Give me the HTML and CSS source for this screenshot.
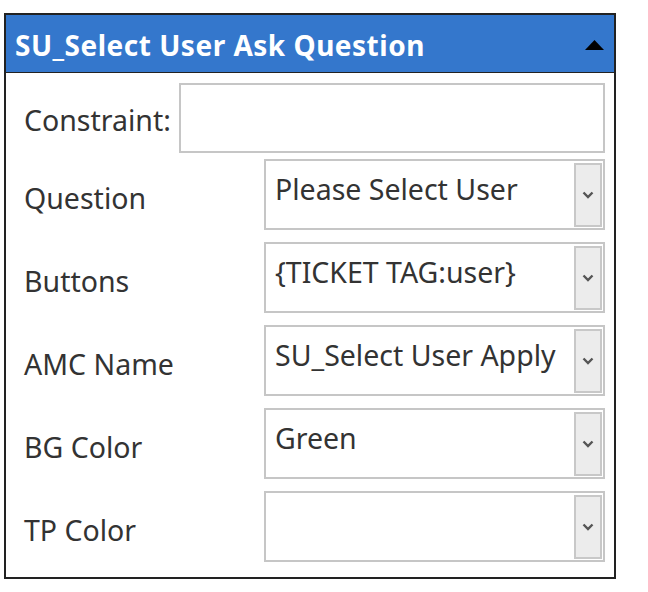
FILE: index.html
```html
<!DOCTYPE html>
<html>
<head>
<meta charset="utf-8">
<link rel="stylesheet" href="styles.css">
</head>
<body>
<div class="panel">
  <div class="header">
    <span class="title">SU_Select User Ask Question</span>
    <svg class="caret" width="19" height="10" viewBox="0 0 19 10"><polygon points="0,10 19,10 9.5,0" fill="#000"/></svg>
  </div>
  <div class="body">
    <div class="row row-constraint">
      <span class="label">Constraint:</span>
      <div class="input"></div>
    </div>
    <div class="row">
      <span class="label">Question</span>
      <div class="select"><span class="value">Please Select User</span><span class="btn"><svg width="12" height="8" viewBox="0 0 12 8"><polyline points="1.5,1.5 6,6 10.5,1.5" fill="none" stroke="#555" stroke-width="2.4"/></svg></span></div>
    </div>
    <div class="row">
      <span class="label">Buttons</span>
      <div class="select"><span class="value">{TICKET TAG:user}</span><span class="btn"><svg width="12" height="8" viewBox="0 0 12 8"><polyline points="1.5,1.5 6,6 10.5,1.5" fill="none" stroke="#555" stroke-width="2.4"/></svg></span></div>
    </div>
    <div class="row">
      <span class="label">AMC Name</span>
      <div class="select"><span class="value">SU_Select User Apply</span><span class="btn"><svg width="12" height="8" viewBox="0 0 12 8"><polyline points="1.5,1.5 6,6 10.5,1.5" fill="none" stroke="#555" stroke-width="2.4"/></svg></span></div>
    </div>
    <div class="row">
      <span class="label">BG Color</span>
      <div class="select"><span class="value">Green</span><span class="btn"><svg width="12" height="8" viewBox="0 0 12 8"><polyline points="1.5,1.5 6,6 10.5,1.5" fill="none" stroke="#555" stroke-width="2.4"/></svg></span></div>
    </div>
    <div class="row">
      <span class="label">TP Color</span>
      <div class="select"><span class="value"></span><span class="btn"><svg width="12" height="8" viewBox="0 0 12 8"><polyline points="1.5,1.5 6,6 10.5,1.5" fill="none" stroke="#555" stroke-width="2.4"/></svg></span></div>
    </div>
  </div>
</div>
</body>
</html>
```
FILE: styles.css
```css
html, body {
  margin: 0;
  padding: 0;
  background: #fff;
}
body {
  font-family: "Noto Sans", "Open Sans", sans-serif;
}
.panel {
  margin: 13px 0 0 4px;
  width: 612px;
  box-sizing: border-box;
  border: 2px solid #222;
  background: #fff;
}
.header {
  height: 58px;
  box-sizing: border-box;
  border-bottom: 1px solid #222;
  background: #3477cc;
  display: flex;
  align-items: center;
  justify-content: space-between;
  padding: 0 10px 0 9px;
}
.title {
  color: #fff;
  font-weight: 700;
  font-size: 28px;
  line-height: 34px;
  letter-spacing: 0.5px;
  padding-top: 3px;
  white-space: nowrap;
}
.caret {
  display: block;
  margin-top: 3px;
}
.body {
  padding: 10px 9px 15px 18px;
}
.row {
  display: flex;
  align-items: center;
  margin-top: 12px;
}
.row-constraint {
  margin-top: 0;
  margin-bottom: -6px;
}
.label {
  color: #333;
  font-size: 28.5px;
  line-height: 34px;
  padding-top: 6px;
  flex: 0 0 240px;
  white-space: nowrap;
}
.row-constraint .label {
  flex: 0 0 155px;
  padding-top: 3px;
}
.input {
  flex: 1;
  height: 70px;
  box-sizing: border-box;
  border: 2px solid #c6c6c6;
}
.select {
  flex: 1;
  height: 71px;
  box-sizing: border-box;
  border: 2px solid #c6c6c6;
  display: flex;
  align-items: stretch;
  padding: 2px 1px 1px 0;
}
.value {
  flex: 1;
  color: #333;
  font-size: 28.5px;
  line-height: 34px;
  padding: 9px 0 0 9px;
  white-space: nowrap;
  overflow: hidden;
}
.btn {
  width: 28px;
  box-sizing: border-box;
  border: 2px solid #c8c8c8;
  background: #ececec;
  display: flex;
  align-items: center;
  justify-content: center;
}
.btn svg {
  display: block;
}
```
